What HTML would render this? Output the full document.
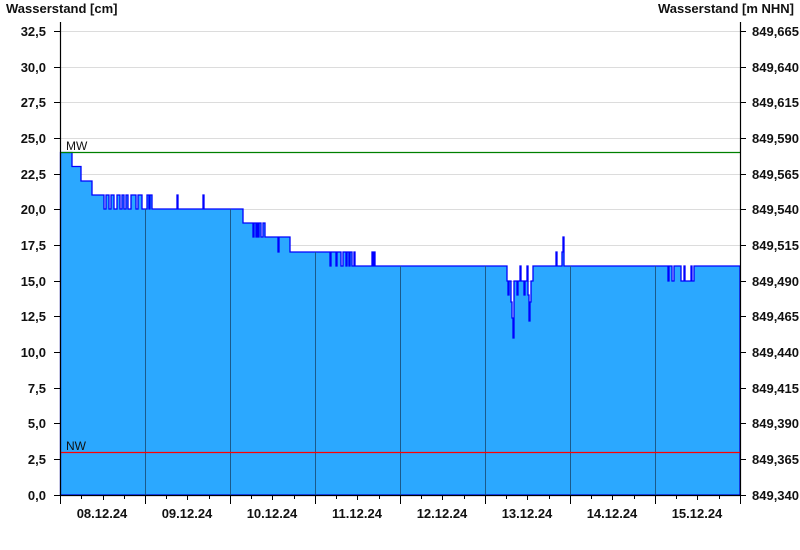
<!DOCTYPE html>
<html><head><meta charset="utf-8"><style>
html,body{margin:0;padding:0;background:#fff;width:800px;height:550px;overflow:hidden}
svg text{font-family:"Liberation Sans",Arial,sans-serif;font-size:13px;font-weight:bold;fill:#111}
</style></head><body>
<svg width="800" height="550" viewBox="0 0 800 550" xmlns="http://www.w3.org/2000/svg">
<text x="6" y="13">Wasserstand [cm]</text>
<text x="794" y="13" text-anchor="end">Wasserstand [m NHN]</text>
<g stroke="#dcdcdc" stroke-width="1">
<line x1="60" y1="31.5" x2="740" y2="31.5"/><line x1="60" y1="67.5" x2="740" y2="67.5"/><line x1="60" y1="102.5" x2="740" y2="102.5"/><line x1="60" y1="138.5" x2="740" y2="138.5"/><line x1="60" y1="174.5" x2="740" y2="174.5"/><line x1="60" y1="209.5" x2="740" y2="209.5"/><line x1="60" y1="245.5" x2="740" y2="245.5"/><line x1="60" y1="281.5" x2="740" y2="281.5"/>
</g>
<path fill="#2ba8ff" stroke="#0000ff" stroke-width="1.3" d="M60.5,495 V152.5 H72 V166.5 H81 V181 H92 V195 H104 V209 H106 V195 H109 V209 H111 V195 H114 V209 H117 V195 H120 V209 H122 V195 H124 V209 H126 V195 H128 V209 H131 V195 H136 V209 H138 V195 H142 V209 H145 V209 H147 V195 H149 V209 H150 V195 H152 V209 H177 V195 H178 V209 H203 V195 H204 V209 H243 V223 H253 V237 H254 V223 H256 V237 H257 V223 H258 V237 H259 V223 H261 V237 H263 V223 H265 V237 H278 V252 H279 V237 H290 V252 H330 V266 H331 V252 H336 V266 H337 V252 H341 V266 H343 V252 H346 V266 H347 V252 H349 V266 H350 V252 H352 V266 H354 V252 H355 V266 H372 V252 H373 V266 H374 V252 H375 V266 H507 V281 H508 V295 H509 V281 H511 V302 H512 V318 H513 V338 H514 V281 H517 V295 H518 V281 H520 V266 H521 V281 H524 V295 H525 V281 H527 V266 H528 V295 H529 V321 H530 V302 H531 V281 H533 V266 H556 V252 H557 V266 H562 V252 H563 V237 H564 V266 H668 V281 H669 V266 H672 V281 H674 V266 H681 V281 H684 V266 H685 V281 H691 V266 H692 V281 H694 V266 H740 V495 Z"/>
<g stroke="#1a5a8c" stroke-width="1">
<line x1="145.5" y1="209" x2="145.5" y2="495"/><line x1="230.5" y1="209" x2="230.5" y2="495"/><line x1="315.5" y1="252" x2="315.5" y2="495"/><line x1="400.5" y1="266" x2="400.5" y2="495"/><line x1="485.5" y1="266" x2="485.5" y2="495"/><line x1="570.5" y1="266" x2="570.5" y2="495"/><line x1="655.5" y1="266" x2="655.5" y2="495"/>
</g>
<line x1="60" y1="152.5" x2="740" y2="152.5" stroke="#008000" stroke-width="1.2"/>
<line x1="60" y1="452.5" x2="740" y2="452.5" stroke="#ff0000" stroke-width="1.2"/>
<text x="66" y="150" style="font-weight:normal;font-size:12px">MW</text>
<text x="66" y="450" style="font-weight:normal;font-size:12px">NW</text>
<g stroke="#000" stroke-width="1.2">
<line x1="60.5" y1="22" x2="60.5" y2="496"/><line x1="740.5" y1="22" x2="740.5" y2="496"/><line x1="60" y1="495.5" x2="740" y2="495.5"/>
</g>
<g stroke="#000" stroke-width="1">
<path d="M54,31.5H60M54,67.5H60M54,102.5H60M54,138.5H60M54,174.5H60M54,209.5H60M54,245.5H60M54,281.5H60M54,316.5H60M54,352.5H60M54,388.5H60M54,423.5H60M54,459.5H60M54,495.5H60"/>
<path d="M740,31.5H746M740,67.5H746M740,102.5H746M740,138.5H746M740,174.5H746M740,209.5H746M740,245.5H746M740,281.5H746M740,316.5H746M740,352.5H746M740,388.5H746M740,423.5H746M740,459.5H746M740,495.5H746"/>
<path d="M60.5,495V504M145.5,495V504M230.5,495V504M315.5,495V504M400.5,495V504M485.5,495V504M570.5,495V504M655.5,495V504M740.5,495V504M81.5,495V499M124.5,495V499M166.5,495V499M209.5,495V499M251.5,495V499M294.5,495V499M336.5,495V499M379.5,495V499M421.5,495V499M464.5,495V499M506.5,495V499M549.5,495V499M591.5,495V499M634.5,495V499M676.5,495V499M719.5,495V499M103.5,495V500M187.5,495V500M272.5,495V500M357.5,495V500M442.5,495V500M527.5,495V500M612.5,495V500M697.5,495V500"/>
</g>
<g text-anchor="end">
<text x="46" y="36">32,5</text><text x="46" y="72">30,0</text><text x="46" y="107">27,5</text><text x="46" y="143">25,0</text><text x="46" y="179">22,5</text><text x="46" y="214">20,0</text><text x="46" y="250">17,5</text><text x="46" y="286">15,0</text><text x="46" y="321">12,5</text><text x="46" y="357">10,0</text><text x="46" y="393">7,5</text><text x="46" y="428">5,0</text><text x="46" y="464">2,5</text><text x="46" y="500">0,0</text>
</g>
<g>
<text x="752" y="36">849,665</text><text x="752" y="72">849,640</text><text x="752" y="107">849,615</text><text x="752" y="143">849,590</text><text x="752" y="179">849,565</text><text x="752" y="214">849,540</text><text x="752" y="250">849,515</text><text x="752" y="286">849,490</text><text x="752" y="321">849,465</text><text x="752" y="357">849,440</text><text x="752" y="393">849,415</text><text x="752" y="428">849,390</text><text x="752" y="464">849,365</text><text x="752" y="500">849,340</text>
</g>
<g text-anchor="middle">
<text x="102" y="518">08.12.24</text><text x="187" y="518">09.12.24</text><text x="272" y="518">10.12.24</text><text x="357" y="518">11.12.24</text><text x="442" y="518">12.12.24</text><text x="527" y="518">13.12.24</text><text x="612" y="518">14.12.24</text><text x="697" y="518">15.12.24</text>
</g>
</svg>
</body></html>
